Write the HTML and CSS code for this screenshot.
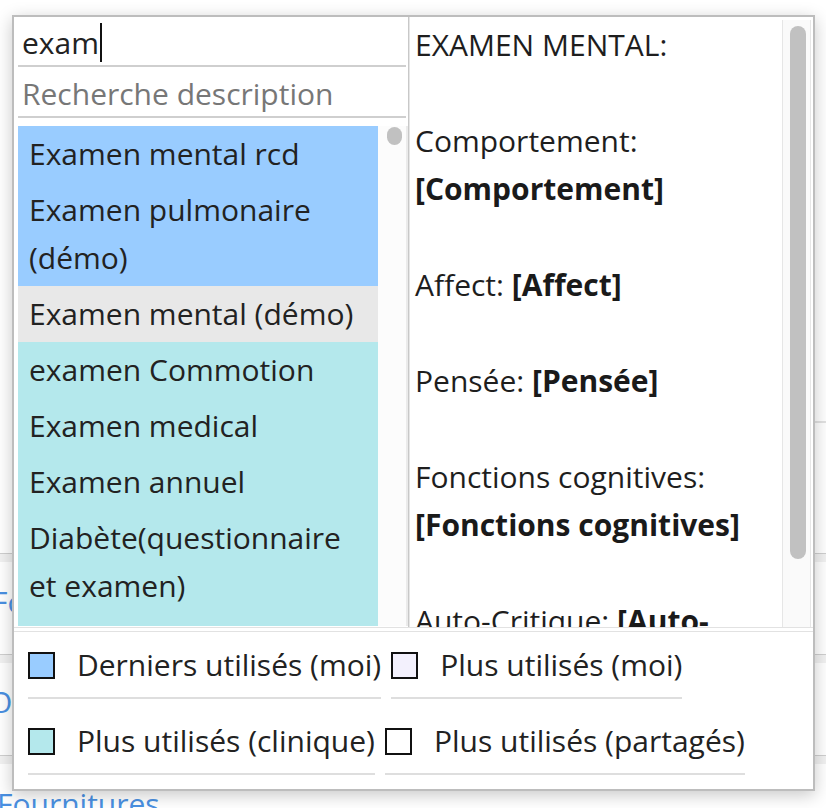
FILE: index.html
```html
<!DOCTYPE html>
<html lang="fr">
<head>
<meta charset="utf-8">
<title>Recherche</title>
<link rel="stylesheet" href="styles.css">
</head>
<body>
<div class="page">
  <div class="bg-space1"></div>
  <div class="bg-rline"></div>
  <div class="bg-space2"></div>
  <div class="bg-sep"></div>
  <div class="bg-row r1"><span class="link ind-f">Formulaires</span></div>
  <div class="bg-sep"></div>
  <div class="bg-row r2"><span class="link ind-o">Ordonnances</span></div>
  <div class="bg-sep"></div>
  <div class="bg-row r3"><span class="link ind-n">Fournitures</span></div>
</div>

<div class="popup">
  <div class="main">
    <div class="left">
      <div class="search">
        <div class="field f1">exam<span class="caret"></span></div>
        <div class="field ph">Recherche description</div>
      </div>
      <div class="list">
        <div class="items">
          <div class="item recent">Examen mental rcd</div>
          <div class="item recent">Examen pulmonaire (démo)</div>
          <div class="item sel">Examen mental (démo)</div>
          <div class="item clinic">examen Commotion</div>
          <div class="item clinic">Examen medical</div>
          <div class="item clinic">Examen annuel</div>
          <div class="item clinic">Diabète(questionnaire et examen)</div>
          <div class="item clinic">Examen de la vue</div>
        </div>
        <div class="sb"><div class="thumb"></div></div>
      </div>
    </div>
    <div class="preview">
      <div class="text">EXAMEN MENTAL:<br><br>Comportement: <b>[Comportement]</b><br><br>Affect: <b>[Affect]</b><br><br>Pensée: <b>[Pensée]</b><br><br>Fonctions cognitives: <b>[Fonctions cognitives]</b><br><br>Auto-Critique: <b>[Auto-Critique]</b><br><br>Jugement: <b>[Jugement]</b></div>
      <div class="sb2"><div class="thumb2"></div></div>
    </div>
  </div>
  <div class="legend">
    <div class="leg"><span class="sq sq-recent"></span>Derniers utilisés (moi)</div>
    <div class="leg"><span class="sq sq-mine"></span>Plus utilisés (moi)</div>
    <div class="leg"><span class="sq sq-clinic"></span>Plus utilisés (clinique)</div>
    <div class="leg"><span class="sq sq-shared"></span>Plus utilisés (partagés)</div>
  </div>
</div>
</body>
</html>
```

FILE: styles.css
```css
html, body {
  margin: 0;
  padding: 0;
  background: #fff;
}
body {
  font-family: "Open Sans", "Noto Sans", sans-serif;
  font-size: 30px;
  line-height: 48px;
  color: #222;
  overflow: hidden;
  width: 826px;
  height: 808px;
  position: relative;
}

/* background page */
.page {
  display: flex;
  flex-direction: column;
}
.bg-space1 { height: 421px; }
.bg-rline {
  height: 0;
  border-top: 2px solid #e2e2e2;
  margin-left: 600px;
}
.bg-space2 { height: 130px; }
.bg-sep {
  height: 8px;
  border-top: 1px solid #cfcfcf;
  background: #f1f1f1;
}
.bg-row {
  height: 92px;
  white-space: nowrap;
  overflow: hidden;
}
.r1 { padding-top: 16px; height: 76px; }
.r2 { padding-top: 15px; height: 77px; }
.r3 { padding-top: 16px; height: 60px; }
.link {
  display: block;
  color: #4a90e2;
}
.ind-f { text-indent: -8px; }
.ind-o { text-indent: -11px; }
.ind-n { text-indent: -3px; }

/* popup */
.popup {
  position: absolute;
  left: 12px;
  top: 15px;
  width: 799px;
  height: 772px;
  border: 2px solid #bdbdbd;
  background: #fff;
  box-shadow: 0 4px 16px rgba(0, 0, 0, 0.22);
  display: flex;
  flex-direction: column;
}
.main {
  height: 610px;
  display: flex;
  border-bottom: 1px solid #e2e2e2;
  overflow: hidden;
}
.left {
  width: 395px;
  box-sizing: border-box;
  padding-left: 4px;
  border-right: 1px solid #c8c8c8;
  display: flex;
  flex-direction: column;
  flex: none;
}
.search {
  display: flex;
  flex-direction: column;
}
.field {
  margin-right: 2px;
  padding: 4px 0 0 4px;
  line-height: 45px;
  border-bottom: 2px solid #cfcfcf;
  white-space: nowrap;
  color: #222;
}
.field.f1 { padding-top: 3px; }
.field.ph { color: #777; }
.caret {
  display: inline-block;
  width: 2px;
  height: 39px;
  background: #111;
  vertical-align: -8px;
  margin-left: 1px;
}
.list {
  margin-top: 8px;
  height: 500px;
  display: flex;
  overflow: hidden;
}
.items {
  width: 360px;
  flex: none;
  overflow: hidden;
}
.item {
  padding: 4px 12px 4px 11px;
  color: #222;
}
.recent { background: #99ccff; }
.sel { background: #e8e8e8; }
.clinic { background: #b4e8ec; }
.sb {
  width: 30px;
  box-sizing: border-box;
  background: #fcfcfc;
  border-right: 2px solid #ebebeb;
  padding-top: 1px;
}
.thumb {
  width: 15px;
  height: 18px;
  margin-left: 9px;
  border-radius: 8px;
  background: #c1c1c1;
}

.preview {
  flex: 1;
  display: flex;
  border-left: 1px solid #e6e6e6;
  min-width: 0;
}
.text {
  flex: 1;
  padding: 4px 0 0 5px;
  color: #1e1e1e;
  min-width: 0;
}
.text b { font-weight: 700; color: #1a1a1a; }
.sb2 {
  width: 29px;
  box-sizing: border-box;
  margin: 3px 2px 0 0;
  border-left: 1px solid #e6e6e6;
  border-right: 1px solid #e6e6e6;
  background: #fafafa;
  padding-top: 6px;
  flex: none;
}
.thumb2 {
  width: 16px;
  height: 533px;
  margin-left: 7px;
  border-radius: 8px;
  background: #c1c1c1;
}

/* legend */
.legend {
  margin-top: 3px;
  border-top: 1px solid #e2e2e2;
  padding: 9px 14px 0 14px;
  display: flex;
  flex-wrap: wrap;
  column-gap: 10px;
  row-gap: 18px;
  align-content: flex-start;
}
.leg {
  display: flex;
  align-items: center;
  padding-bottom: 8px;
  border-bottom: 2px solid #dedede;
  white-space: nowrap;
  color: #222;
}
.sq {
  width: 27px;
  height: 27px;
  box-sizing: border-box;
  border: 2px solid #111;
  margin-right: 22px;
  flex: none;
}
.sq-recent { background: #99ccff; }
.sq-mine { background: #f3f1fd; }
.sq-clinic { background: #b4e8ec; }
.sq-shared { background: #fff; }
```
